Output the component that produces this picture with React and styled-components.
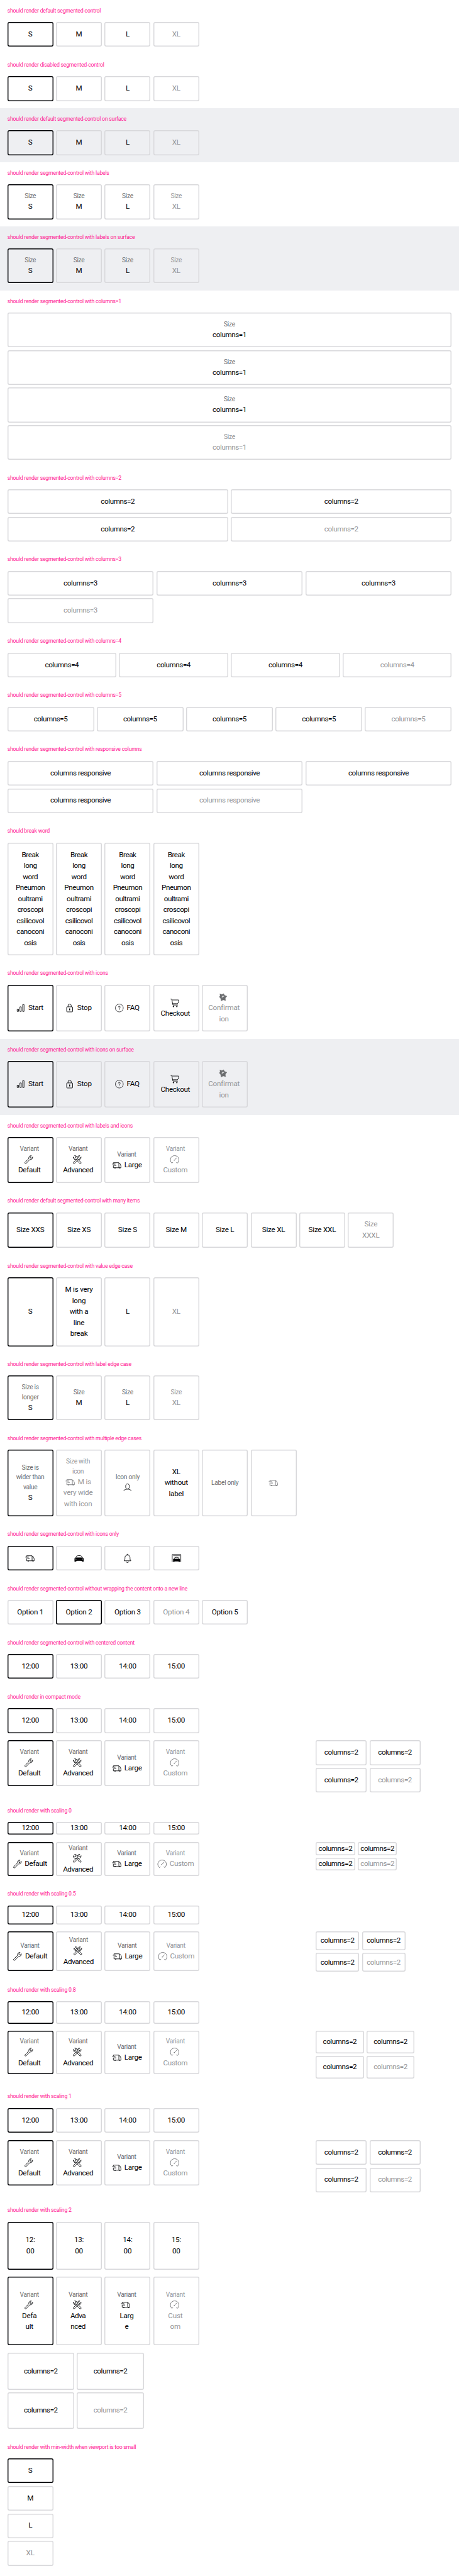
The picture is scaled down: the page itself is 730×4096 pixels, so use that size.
import React from "react";
import styled, { createGlobalStyle } from "styled-components";

const u = (n) => `${+(n * 0.73).toFixed(3)}px`;

const colors = {
  primary: "#010205",
  medium: "#6b6d70",
  disabled: "#949598",
  line: "#d8d8db",
  surface: "#eeeff2",
  heading: "#ff1493",
};

const GlobalStyle = createGlobalStyle`
  body {
    margin: 0;
    background: #fff;
    color: ${colors.primary};
    font-family: Roboto, "Liberation Sans", sans-serif;
  }
`;

const Page = styled.main`
  width: ${u(1000)};
  min-height: 4096px;
  overflow: hidden;
`;

const Section = styled.section`
  padding: ${u(16)};
  background: ${(p) => (p.$surface ? colors.surface : "transparent")};
`;

const Heading = styled.h3`
  margin: 0 0 ${u(16)};
  color: ${colors.heading};
  font-size: ${u(12)};
  font-weight: 400;
  line-height: ${u(16)};
  letter-spacing: ${u(-0.34)};
  white-space: nowrap;
`;

const Stack = styled.div`
  display: flex;
  flex-direction: column;
  gap: ${u(16)};
`;

const Split = styled.div`
  display: grid;
  grid-template-columns: ${u(656)} auto;
  justify-content: start;
  align-items: start;
  gap: ${u(16)};
`;

const Control = styled.div`
  display: grid;
  grid-template-columns: repeat(${(p) => p.$columns}, ${(p) => (p.$width ? u(p.$width) : "minmax(0, 1fr)")});
  gap: ${u(6)};
`;

const Segment = styled.div`
  box-sizing: border-box;
  display: flex;
  flex-direction: column;
  align-items: center;
  justify-content: center;
  padding: ${(p) => u(2 + 13 * p.$scaling)} 0;
  padding-right: ${(p) => u(p.$shift)};
  border-radius: ${u(4)};
  box-shadow: inset 0 0 0 ${u(2)} ${(p) => (p.$selected ? colors.primary : colors.line)};
  color: ${(p) => (p.$disabled ? colors.disabled : colors.primary)};
  white-space: nowrap;
`;

const Label = styled.span`
  color: ${(p) => (p.$disabled ? colors.disabled : colors.medium)};
  font-size: ${u(14)};
  line-height: ${u(21.68)};
  letter-spacing: ${u(-0.4)};
`;

const Value = styled.span`
  display: flex;
  align-items: center;
  height: ${u(24)};
  font-size: ${u(16)};
  line-height: ${u(24)};
  letter-spacing: ${(p) => u(p.$tracking)};
`;

const Glyph = styled.svg`
  flex: none;
  width: ${u(24)};
  height: ${u(24)};
  margin-right: ${(p) => u(p.$gap)};
  color: ${(p) => (p.$muted ? colors.medium : colors.primary)};
  fill: none;
  stroke: currentColor;
  stroke-width: 1.2;
`;

const wrench =
  "M3.6 18.2 L12.2 9.8 C11.4 6.6 13.6 3.4 17.6 3.5 L15 6.4 L15.5 8.6 L17.8 9 L20.4 6.4 C20.8 10.4 17.6 12.8 14.4 12 L6.2 20.5 C4.6 21.4 2.7 19.9 3.6 18.2 Z";

const icons = {
  bars: <path d="M4.5 14.5h3v5h-3z M10.5 9.5h3v10h-3z M16.5 4.5h3v15h-3z" />,
  lock: (
    <>
      <rect x="5.5" y="9.5" width="13" height="11" rx="1.5" />
      <path d="M8.5 9.5V7a3.5 3.5 0 0 1 7 0v2.5" />
      <path d="M12 13v4" strokeWidth="2" />
    </>
  ),
  question: (
    <>
      <circle cx="12" cy="12" r="8.6" strokeWidth="1" />
      <path d="M10 10.2c0-2.500 4-2.500 4-.2 0 1.600-2 1.700-2 3.500M12 15v1.300" />
    </>
  ),
  cart: (
    <>
      <path d="M3 3.500h2.500l2.800 13h10.800M5.800 5.500h14.700v3.500c0 3-2 4.500-4.500 4.500H7.600" />
      <circle cx="9.300" cy="19.700" r="1.400" fill="currentColor" stroke="none" />
      <circle cx="16.800" cy="19.700" r="1.400" fill="currentColor" stroke="none" />
    </>
  ),
  star: (
    <>
      <path
        d="M5 4.500l4.500 1.300 4-1.800 1.500 3.600 5.500 2-3.500 4 .500 5.600-5-1.500-4.800 2.300-.700-5L3.800 11l1.900-2.500z"
        fill="currentColor"
        strokeWidth="0.500"
      />
      <path d="M8.500 11.500l1.800-2.500 2.500-.6 1.800 2-2 .4-1 1.800z" fill="#fff" stroke="none" opacity="0.700" />
    </>
  ),
  wrench: <path d={wrench} />,
  tools: (
    <>
      <path d={wrench} />
      <path d={wrench} transform="matrix(-1 0 0 1 24 0)" />
    </>
  ),
  van: (
    <>
      <path d="M4.500 8.500v-2h12v11M2 9.500h7M6 12.500h5M4.500 12v5.500h16.500c.400-4-.500-7-2.500-9.500h-2" />
      <path d="M7 18h2.400M17.300 18h2.400" strokeWidth="2" />
    </>
  ),
  gauge: (
    <>
      <path d="M8.500 17.700L6.300 20C-.500 14.500 2.800 3.500 12 3.500S24.500 14.500 17.700 20l-2.200-2.300" />
      <path d="M10.800 13.800L16.500 8" />
      <circle cx="11.200" cy="13.300" r="1" fill="currentColor" stroke="none" />
    </>
  ),
  person: (
    <>
      <ellipse cx="12" cy="9" rx="4" ry="5.600" />
      <path d="M3.700 18.500c1.500-2.800 5-3.600 8.300-3.600s6.800.8 8.300 3.600" />
    </>
  ),
  car: (
    <>
      <path d="M5 10.500l2-3.500c3-1.200 7-1.200 10 0l2 3.500" />
      <path d="M4 10.300h16l2 2v7h-4v-1.500H6v1.500H2v-7z" fill="currentColor" stroke="none" />
      <path d="M3.200 13.500l3 .6M20.800 13.500l-3 .6" stroke="#fff" strokeWidth="0.900" />
      <path d="M8 16.300h8" stroke="#fff" strokeWidth="0.500" />
    </>
  ),
  bell: (
    <>
      <path d="M4.500 17.500c1.800-1.500 2-3 2-7 0-3.300 2-5.500 5.500-5.500s5.500 2.200 5.500 5.500c0 4 .200 5.500 2 7z" strokeLinejoin="round" />
      <path d="M10.300 4.500c.300-1.800 3.100-1.800 3.400 0M9 19.500c.700 2.300 5.300 2.300 6 0" />
    </>
  ),
  garage: (
    <>
      <path d="M2.600 20V4h18.800v16" />
      <path d="M4.500 6.500h15" strokeWidth="0.900" />
      <path d="M6.500 13.500l1.600-3c2.300-.8 5.500-.8 7.800 0l1.600 3" />
      <path d="M4.500 14l1.500-1h12l1.500 1v6h-3v-1H7.500v1h-3z" fill="currentColor" stroke="none" />
    </>
  ),
};

function Icon({ name, gap = 0, muted }) {
  return (
    <Glyph viewBox="0 0 24 24" $gap={gap} $muted={muted}>
      {icons[name]}
    </Glyph>
  );
}

function SegmentItem({ item, scaling }) {
  const { label, icon, iconAbove, lines = [], disabled, selected, muted, tracking = -0.3 } = item;
  const hasShift = icon && lines.length > 0;
  const gap = lines.length > 0 ? 4 : 0;
  const glyph = icon ? <Icon name={icon} gap={gap} muted={disabled || muted} /> : null;
  const separate = glyph && (iconAbove || lines.length === 0);
  return (
    <Segment $selected={selected} $disabled={disabled} $scaling={scaling} $shift={hasShift ? (scaling === 0.5 ? 2 : 4) : 0}>
      {[].concat(label || []).map((text) => (
        <Label key={text} $disabled={disabled}>
          {text}
        </Label>
      ))}
      {separate && <Value $tracking={tracking}>{glyph}</Value>}
      {lines.map((text, index) => (
        <Value key={text} $tracking={tracking}>
          {!separate && index === 0 && glyph}
          {text}
        </Value>
      ))}
    </Segment>
  );
}

function SegmentedControl({ items, columns = items.length, width, scaling = 1 }) {
  return (
    <Control $columns={columns} $width={width}>
      {items.map((item, index) => (
        <SegmentItem key={index} item={item} scaling={scaling} />
      ))}
    </Control>
  );
}

function Case({ title, surface, children }) {
  return (
    <Section $surface={surface}>
      <Heading>{title}</Heading>
      {children}
    </Section>
  );
}

const sizes = (label, selected = 0) =>
  ["S", "M", "L", "XL"].map((size, index) => ({
    label,
    lines: [size],
    selected: index === selected,
    disabled: index === 3,
  }));

const repeat = (text, count, label) =>
  Array.from({ length: count }, (_, index) => ({
    label,
    lines: [text],
    tracking: -0.6,
    disabled: index === count - 1,
  }));

const times = ["12:00", "13:00", "14:00", "15:00"].map((time, index) => ({
  lines: [time],
  tracking: -0.45,
  selected: index === 0,
}));

const splitTimes = ["12:", "13:", "14:", "15:"].map((hour, index) => ({
  lines: [hour, "00"],
  selected: index === 0,
}));

const brokenWord = {
  lines: ["Break", "long", "word", "Pneumon", "oultrami", "croscopi", "csilicovol", "canoconi", "osis"],
  tracking: -0.65,
};

const iconItems = [
  { icon: "bars", lines: ["Start"], selected: true },
  { icon: "lock", lines: ["Stop"] },
  { icon: "question", lines: ["FAQ"] },
  { icon: "cart", lines: ["Checkout"], iconAbove: true, tracking: -0.45 },
  { icon: "star", lines: ["Confirmat", "ion"], iconAbove: true, disabled: true },
];

const variants = (inline) => [
  { label: "Variant", icon: "wrench", lines: ["Default"], iconAbove: !inline, selected: true, tracking: -0.35 },
  { label: "Variant", icon: "tools", lines: ["Advanced"], iconAbove: true, tracking: -0.6 },
  { label: "Variant", icon: "van", lines: ["Large"], tracking: -0.4 },
  { label: "Variant", icon: "gauge", lines: ["Custom"], iconAbove: !inline, disabled: true, tracking: -0.5 },
];

const brokenVariants = [
  { label: "Variant", icon: "wrench", lines: ["Defa", "ult"], iconAbove: true, selected: true },
  { label: "Variant", icon: "tools", lines: ["Adva", "nced"], iconAbove: true, tracking: -0.6 },
  { label: "Variant", icon: "van", lines: ["Larg", "e"], iconAbove: true },
  { label: "Variant", icon: "gauge", lines: ["Cust", "om"], iconAbove: true, disabled: true },
];

const manyItems = [
  ...["XXS", "XS", "S", "M", "L", "XL", "XXL"].map((size, index) => ({
    lines: [`Size ${size}`],
    selected: index === 0,
  })),
  { lines: ["Size", "XXXL"], disabled: true },
];

const valueEdgeCase = [
  { lines: ["S"], selected: true },
  { lines: ["M is very", "long", "with a", "line", "break"] },
  { lines: ["L"] },
  { lines: ["XL"], disabled: true },
];

const labelEdgeCase = sizes("Size").map((item, index) =>
  index === 0 ? { ...item, label: ["Size is", "longer"] } : item
);

const multipleEdgeCases = [
  { label: ["Size is", "wider than", "value"], lines: ["S"], selected: true },
  { label: ["Size with", "icon"], icon: "van", lines: ["M is", "very wide", "with icon"], disabled: true },
  { label: "Icon only", icon: "person" },
  { lines: ["XL", "without", "label"] },
  { label: "Label only" },
  { icon: "van", muted: true },
];

const iconsOnly = [{ icon: "van", selected: true }, { icon: "car" }, { icon: "bell" }, { icon: "garage" }];

const options = [1, 2, 3, 4, 5].map((number) => ({
  lines: [`Option ${number}`],
  selected: number === 2,
  disabled: number === 4,
}));

function ScalingCase({ title, scaling, inline, columnWidth }) {
  return (
    <Case title={title}>
      <Stack>
        <SegmentedControl items={times} width={100} scaling={scaling} />
        <Split>
          <SegmentedControl items={variants(inline)} width={100} scaling={scaling} />
          <SegmentedControl items={repeat("columns=2", 4)} columns={2} width={columnWidth} scaling={scaling} />
        </Split>
      </Stack>
    </Case>
  );
}

export default function App() {
  return (
    <>
      <GlobalStyle />
      <Page>
        <Case title="should render default segmented-control">
          <SegmentedControl items={sizes()} width={100} />
        </Case>
        <Case title="should render disabled segmented-control">
          <SegmentedControl items={sizes()} width={100} />
        </Case>
        <Case title="should render default segmented-control on surface" surface>
          <SegmentedControl items={sizes()} width={100} />
        </Case>
        <Case title="should render segmented-control with labels">
          <SegmentedControl items={sizes("Size")} width={100} />
        </Case>
        <Case title="should render segmented-control with labels on surface" surface>
          <SegmentedControl items={sizes("Size")} width={100} />
        </Case>
        <Case title="should render segmented-control with columns=1">
          <SegmentedControl items={repeat("columns=1", 4, "Size")} columns={1} />
        </Case>
        <Case title="should render segmented-control with columns=2">
          <SegmentedControl items={repeat("columns=2", 4)} columns={2} />
        </Case>
        <Case title="should render segmented-control with columns=3">
          <SegmentedControl items={repeat("columns=3", 4)} columns={3} />
        </Case>
        <Case title="should render segmented-control with columns=4">
          <SegmentedControl items={repeat("columns=4", 4)} columns={4} />
        </Case>
        <Case title="should render segmented-control with columns=5">
          <SegmentedControl items={repeat("columns=5", 5)} columns={5} />
        </Case>
        <Case title="should render segmented-control with responsive columns">
          <SegmentedControl items={repeat("columns responsive", 5)} columns={3} />
        </Case>
        <Case title="should break word">
          <SegmentedControl items={[brokenWord, brokenWord, brokenWord, brokenWord]} width={100} />
        </Case>
        <Case title="should render segmented-control with icons">
          <SegmentedControl items={iconItems} width={100} />
        </Case>
        <Case title="should render segmented-control with icons on surface" surface>
          <SegmentedControl items={iconItems} width={100} />
        </Case>
        <Case title="should render segmented-control with labels and icons">
          <SegmentedControl items={variants(false)} width={100} />
        </Case>
        <Case title="should render default segmented-control with many items">
          <SegmentedControl items={manyItems} width={100} />
        </Case>
        <Case title="should render segmented-control with value edge case">
          <SegmentedControl items={valueEdgeCase} width={100} />
        </Case>
        <Case title="should render segmented-control with label edge case">
          <SegmentedControl items={labelEdgeCase} width={100} />
        </Case>
        <Case title="should render segmented-control with multiple edge cases">
          <SegmentedControl items={multipleEdgeCases} width={100} />
        </Case>
        <Case title="should render segmented-control with icons only">
          <SegmentedControl items={iconsOnly} width={100} />
        </Case>
        <Case title="should render segmented-control without wrapping the content onto a new line">
          <SegmentedControl items={options} width={100} />
        </Case>
        <Case title="should render segmented-control with centered content">
          <SegmentedControl items={times} width={100} />
        </Case>
        <ScalingCase title="should render in compact mode" scaling={1} columnWidth={111} />
        <ScalingCase title="should render with scaling 0" scaling={0} columnWidth={85.5} inline />
        <ScalingCase title="should render with scaling 0.5" scaling={0.5} columnWidth={94.5} inline />
        <ScalingCase title="should render with scaling 0.8" scaling={0.8} columnWidth={104.5} />
        <ScalingCase title="should render with scaling 1" scaling={1} columnWidth={111} />
        <Case title="should render with scaling 2">
          <Stack>
            <SegmentedControl items={splitTimes} width={100} scaling={2} />
            <SegmentedControl items={brokenVariants} width={100} scaling={2} />
            <SegmentedControl items={repeat("columns=2", 4)} columns={2} width={145.7} scaling={2} />
          </Stack>
        </Case>
        <Case title="should render with min-width when viewport is too small">
          <SegmentedControl items={sizes()} columns={1} width={100} />
        </Case>
      </Page>
    </>
  );
}
